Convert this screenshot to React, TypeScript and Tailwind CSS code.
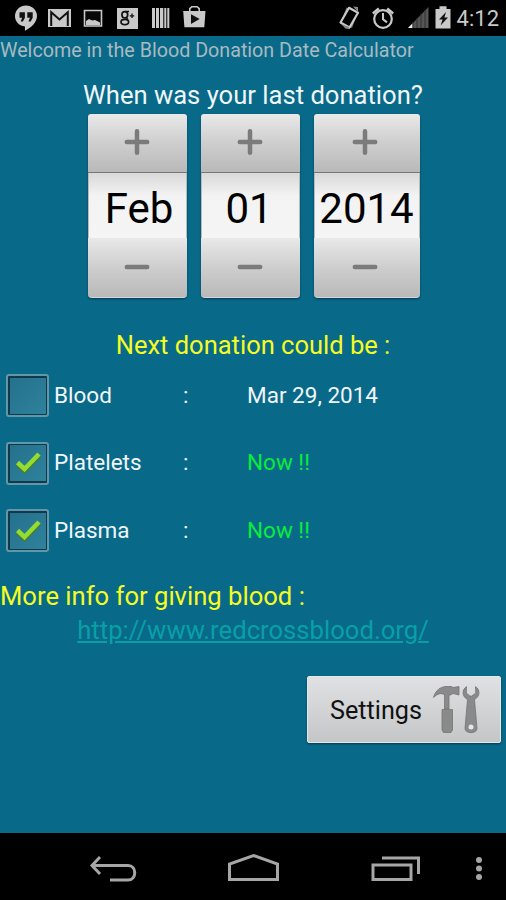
import React, { useState } from 'react';

const dateFields = [
  { id: 'month', value: 'Feb', width: 'w-[99px]', text: 'pl-[3px]', sign: 'pr-px' },
  { id: 'day', value: '01', width: 'w-[99px]', text: 'pr-[3px]', sign: 'pr-px' },
  { id: 'year', value: '2014', width: 'w-[106px]', text: 'pr-px', sign: 'pr-[4px]' }
];

const donations = [
  { id: 'blood', label: 'Blood', result: 'Mar 29, 2014', ready: false },
  { id: 'platelets', label: 'Platelets', result: 'Now !!', ready: true },
  { id: 'plasma', label: 'Plasma', result: 'Now !!', ready: true }
];

const StatusBar = () => (
  <header className="flex h-9 shrink-0 items-center justify-between bg-black pr-[7px] text-[#c9c9c9]">
    <svg width="220" height="36" viewBox="0 0 220 36" fill="currentColor">
      {/* Hangouts */}
      <path d="M26 5.500a11 10.600 0 0 0-11 10.600c0 6 4.400 10 10 10.300v4.400c6-2.800 12-8.500 12-14.700a11 10.600 0 0 0-11-10.600z" />
      <path d="M19.500 12.300h5.400v5.500l-2 3.700h-2.200l1.400-3.700h-2.600zM27.300 12.300h5.400v5.500l-2 3.700h-2.200l1.400-3.700h-2.600z" fill="#111" />
      {/* Gmail */}
      <path d="M48 9h23v18H48z" />
      <path d="M51.200 26V12.300l8.300 7.200 8.300-7.200V26" fill="none" stroke="#111" strokeWidth="2" />
      {/* Gallery */}
      <path d="M84.500 10.500h17V26h-17z" fill="#080808" stroke="currentColor" strokeWidth="1.600" />
      <path d="M86 25v-4l3-2 3 1.500 3-.5 5 2.500V25z" />
      {/* Google+ */}
      <path d="M117 8h21v21h-21z" />
      <g fill="none" stroke="#111" strokeWidth="1.700">
        <ellipse cx="124.800" cy="14.800" rx="2.900" ry="3.200" />
        <ellipse cx="124.800" cy="22" rx="3.800" ry="2.600" />
        <path d="M125 11.500h4M126 17.500l2 2M129.800 15.800h4.400M132 13.600v4.400" strokeWidth="1.300" />
      </g>
      {/* Barcode */}
      <path d="M152 8h3v20h-3zM156 8h3v20h-3zM160 8h3.300v20H160zM164.300 8h2v20h-2zM167.300 8h2v20h-2z" />
      {/* Play Store */}
      <path d="M183.200 11h22.300l-1.200 16.200h-19.900z" />
      <path d="M189.800 11V8.700l2-2h5.400l2 2V11" fill="none" stroke="currentColor" strokeWidth="1.600" />
      <path d="M191 14.300v9.600l8.600-4.800z" fill="#111" />
    </svg>
    <div className="flex items-center">
      <svg width="119" height="36" viewBox="334 0 119 36" fill="none" stroke="currentColor">
        {/* Rotation */}
        <path d="M342.500 7.500l11.500 5-6 15.500-11.500-5z" fill="#777" stroke="none" />
        <path d="M345 7.800l9 5-8.500 14.700-9-5z" fill="#000" strokeWidth="2.200" strokeLinejoin="round" />
        <path d="M349 6.500l5 .5v5zM337 24l4.500 4.500 4 .8-1-2.500z" fill="#888" stroke="none" />
        {/* Alarm */}
        <circle cx="379" cy="19" r="8.800" strokeWidth="2.200" />
        <path d="M379 13v6.200l4 3.200" strokeWidth="2" />
        <path d="M368.800 13.500l6-5M389.200 13.500l-6-5" strokeWidth="2.400" />
        {/* Signal */}
        <path d="M404 28L424.500 7v21z" fill="#555" stroke="none" />
        <path d="M404 28l4.500-4.600V28z" fill="#eee" stroke="none" />
        <path d="M409 22v6M413 18v10M417 14v14M421 10v18" stroke="#333" strokeWidth="1" />
        {/* Battery */}
        <path d="M431.500 9h4V6.300h7V9h4v19.500h-15z" fill="currentColor" stroke="none" />
        <path d="M442 12l-7 7.500h3.600l-2 6 7.400-8h-3.600z" fill="#111" stroke="none" />
      </svg>
      <span className="pt-px text-[22px] leading-none">4:12</span>
    </div>
  </header>
);

const SpinButton = ({ sign, onTop, offset }: { sign: string; onTop?: boolean; offset: string }) => (
  <button
    className={`flex w-full items-center justify-center bg-linear-to-b from-[#e9e9e9] via-[#cecece] to-[#b9b9b9] pb-[2px] ${offset} ${
      onTop ? 'h-[59px] rounded-t-[3px] border-b border-[#777]' : 'h-[60px] rounded-b-[4px] border-b border-[#d5d5d5]'
    }`}
  >
    <svg width="26" height="28" viewBox="0 0 26 28" stroke="#7b7b7b" strokeWidth="4.500" strokeLinecap="round">
      <path d={sign === '+' ? 'M2.800 14h20.400M13 3.300v21.400' : 'M2.800 14h20.400'} />
    </svg>
  </button>
);

const CheckBox = ({ checked, onToggle }: { checked: boolean; onToggle: () => void }) => (
  <button
    onClick={onToggle}
    className="flex size-[43px] items-center justify-center rounded-[3px] border-2 border-[#6197aa] bg-[#12394a] p-[1.500px]"
  >
    <span className="flex size-full items-center justify-center bg-linear-to-br from-[#24718d] to-[#2f829c]">
      {checked && (
        <svg width="28" height="24" viewBox="0 0 28 24" fill="none">
          <path d="M3.500 12l7 6.500L25 3.500" stroke="#4b7d24" strokeWidth="5" transform="translate(0 1)" />
          <path d="M3.500 11.500l7 6.500L25 3" stroke="#93dc30" strokeWidth="4.500" />
        </svg>
      )}
    </span>
  </button>
);

const App: React.FC = () => {
  const [checked, setChecked] = useState<Record<string, boolean>>({ blood: false, platelets: true, plasma: true });

  return (
    <div className="flex h-[900px] w-[506px] flex-col overflow-hidden bg-[#086988] font-['Roboto',sans-serif] whitespace-nowrap text-[#f0f6fa]">
      <StatusBar />

      <main className="flex flex-1 flex-col">
        <h1 className="h-[42px] text-[19.700px] leading-[29px] text-[#a9bac1]">
          Welcome in the Blood Donation Date Calculator
        </h1>
        <h2 className="h-9 text-center text-[25.600px] leading-[35px]">When was your last donation?</h2>

        <div className="flex gap-[14px] pl-[88px]">
          {dateFields.map((field) => (
            <div key={field.id} className={`flex flex-col rounded-[4px] shadow-[0_1px_2px_#033c50] ${field.width}`}>
              <SpinButton sign="+" onTop offset={field.sign} />
              <div
                className={`flex h-[65px] items-center justify-center border-x border-[#bbb] bg-linear-to-b from-[#d9d9d9] via-[#f3f3f3] via-35% to-[#f5f5f5] pt-[7px] text-[42px] leading-none text-black ${field.text}`}
              >
                {field.value}
              </div>
              <SpinButton sign="-" offset={field.sign} />
            </div>
          ))}
        </div>

        <h2 className="mt-[30px] h-[46px] text-center text-[25.500px] leading-[35px] text-[#f4fb25]">
          Next donation could be :
        </h2>

        <div className="flex flex-col gap-[24.500px] pl-[6px]">
          {donations.map((d) => (
            <div key={d.id} className="flex h-[43px] items-center text-[22.500px]">
              <CheckBox
                checked={checked[d.id]}
                onToggle={() => setChecked({ ...checked, [d.id]: !checked[d.id] })}
              />
              <span className="w-[134px] pl-[5px]">{d.label}</span>
              <span className="w-[64px]">:</span>
              <span className={d.ready ? 'text-[#08ec3c]' : ''}>{d.result}</span>
            </div>
          ))}
        </div>

        <h2 className="mt-[27px] h-[34px] text-[25.600px] leading-[35px] text-[#f4fb25]">More info for giving blood :</h2>
        <a href="#" className="h-[63px] text-center text-[25.650px] leading-[34px] text-[#08a0a6] underline">
          http://www.redcrossblood.org/
        </a>

        <button className="mr-[5px] flex h-[67px] w-[194px] items-center self-end rounded-[2px] border border-[#e5e7e8] bg-linear-to-b from-[#dfe1e2] to-[#c4c6c8] pl-[22px] text-[25.200px] text-[#111] shadow-[0_1px_2px_#033c50]">
          <span className="w-[103px] pt-[3px] text-left">Settings</span>
          <svg width="50" height="50" viewBox="0 0 50 50" fill="#8a8a8a" stroke="#747474" strokeWidth=".8">
            {/* Hammer */}
            <path d="M.5 12.500C2.500 5 7.500 2 13 1.500h5.500l1.500 1 6-1v8.500l-6-1.500-2.500 1.500h-1.500v14h-4.500V10c-3-2.500-7-1.500-11 2.500z" />
            <path d="M9 24.500h10.500V45l-1.500 2.500h-7.500L9 45z" />
            {/* Wrench */}
            <path d="M33.500 1.500c-5 3.500-4.500 10 1 13l-2.500 29c0 5.500 12 5.500 12 0l-2.500-29c5.500-3 6-9.500 1-13l.3 6.500-4 3h-2l-3.500-3z" />
            <circle cx="38" cy="42" r="2.500" fill="#e6e6e6" stroke="none" />
          </svg>
        </button>
      </main>

      <nav className="h-[67px] shrink-0 bg-black">
        <svg width="506" height="67" viewBox="0 0 506 67" fill="none" stroke="#a6a6a6" strokeWidth="3">
          <path d="M100 24l-8 8.500 8 8.500M92 32.500h36c9 0 9 14.500 0 14.500h-18" />
          <path d="M229.500 46.500V31l24-8.500 24 8.500v15.500z" />
          <path d="M373 32h38v14.500h-38z" />
          <path d="M382 25h36.500v16" />
          <g fill="#a6a6a6" stroke="none">
            <circle cx="479" cy="27" r="3" />
            <circle cx="479" cy="35.500" r="3" />
            <circle cx="479" cy="44" r="3" />
          </g>
        </svg>
      </nav>
    </div>
  );
};

export default App;
